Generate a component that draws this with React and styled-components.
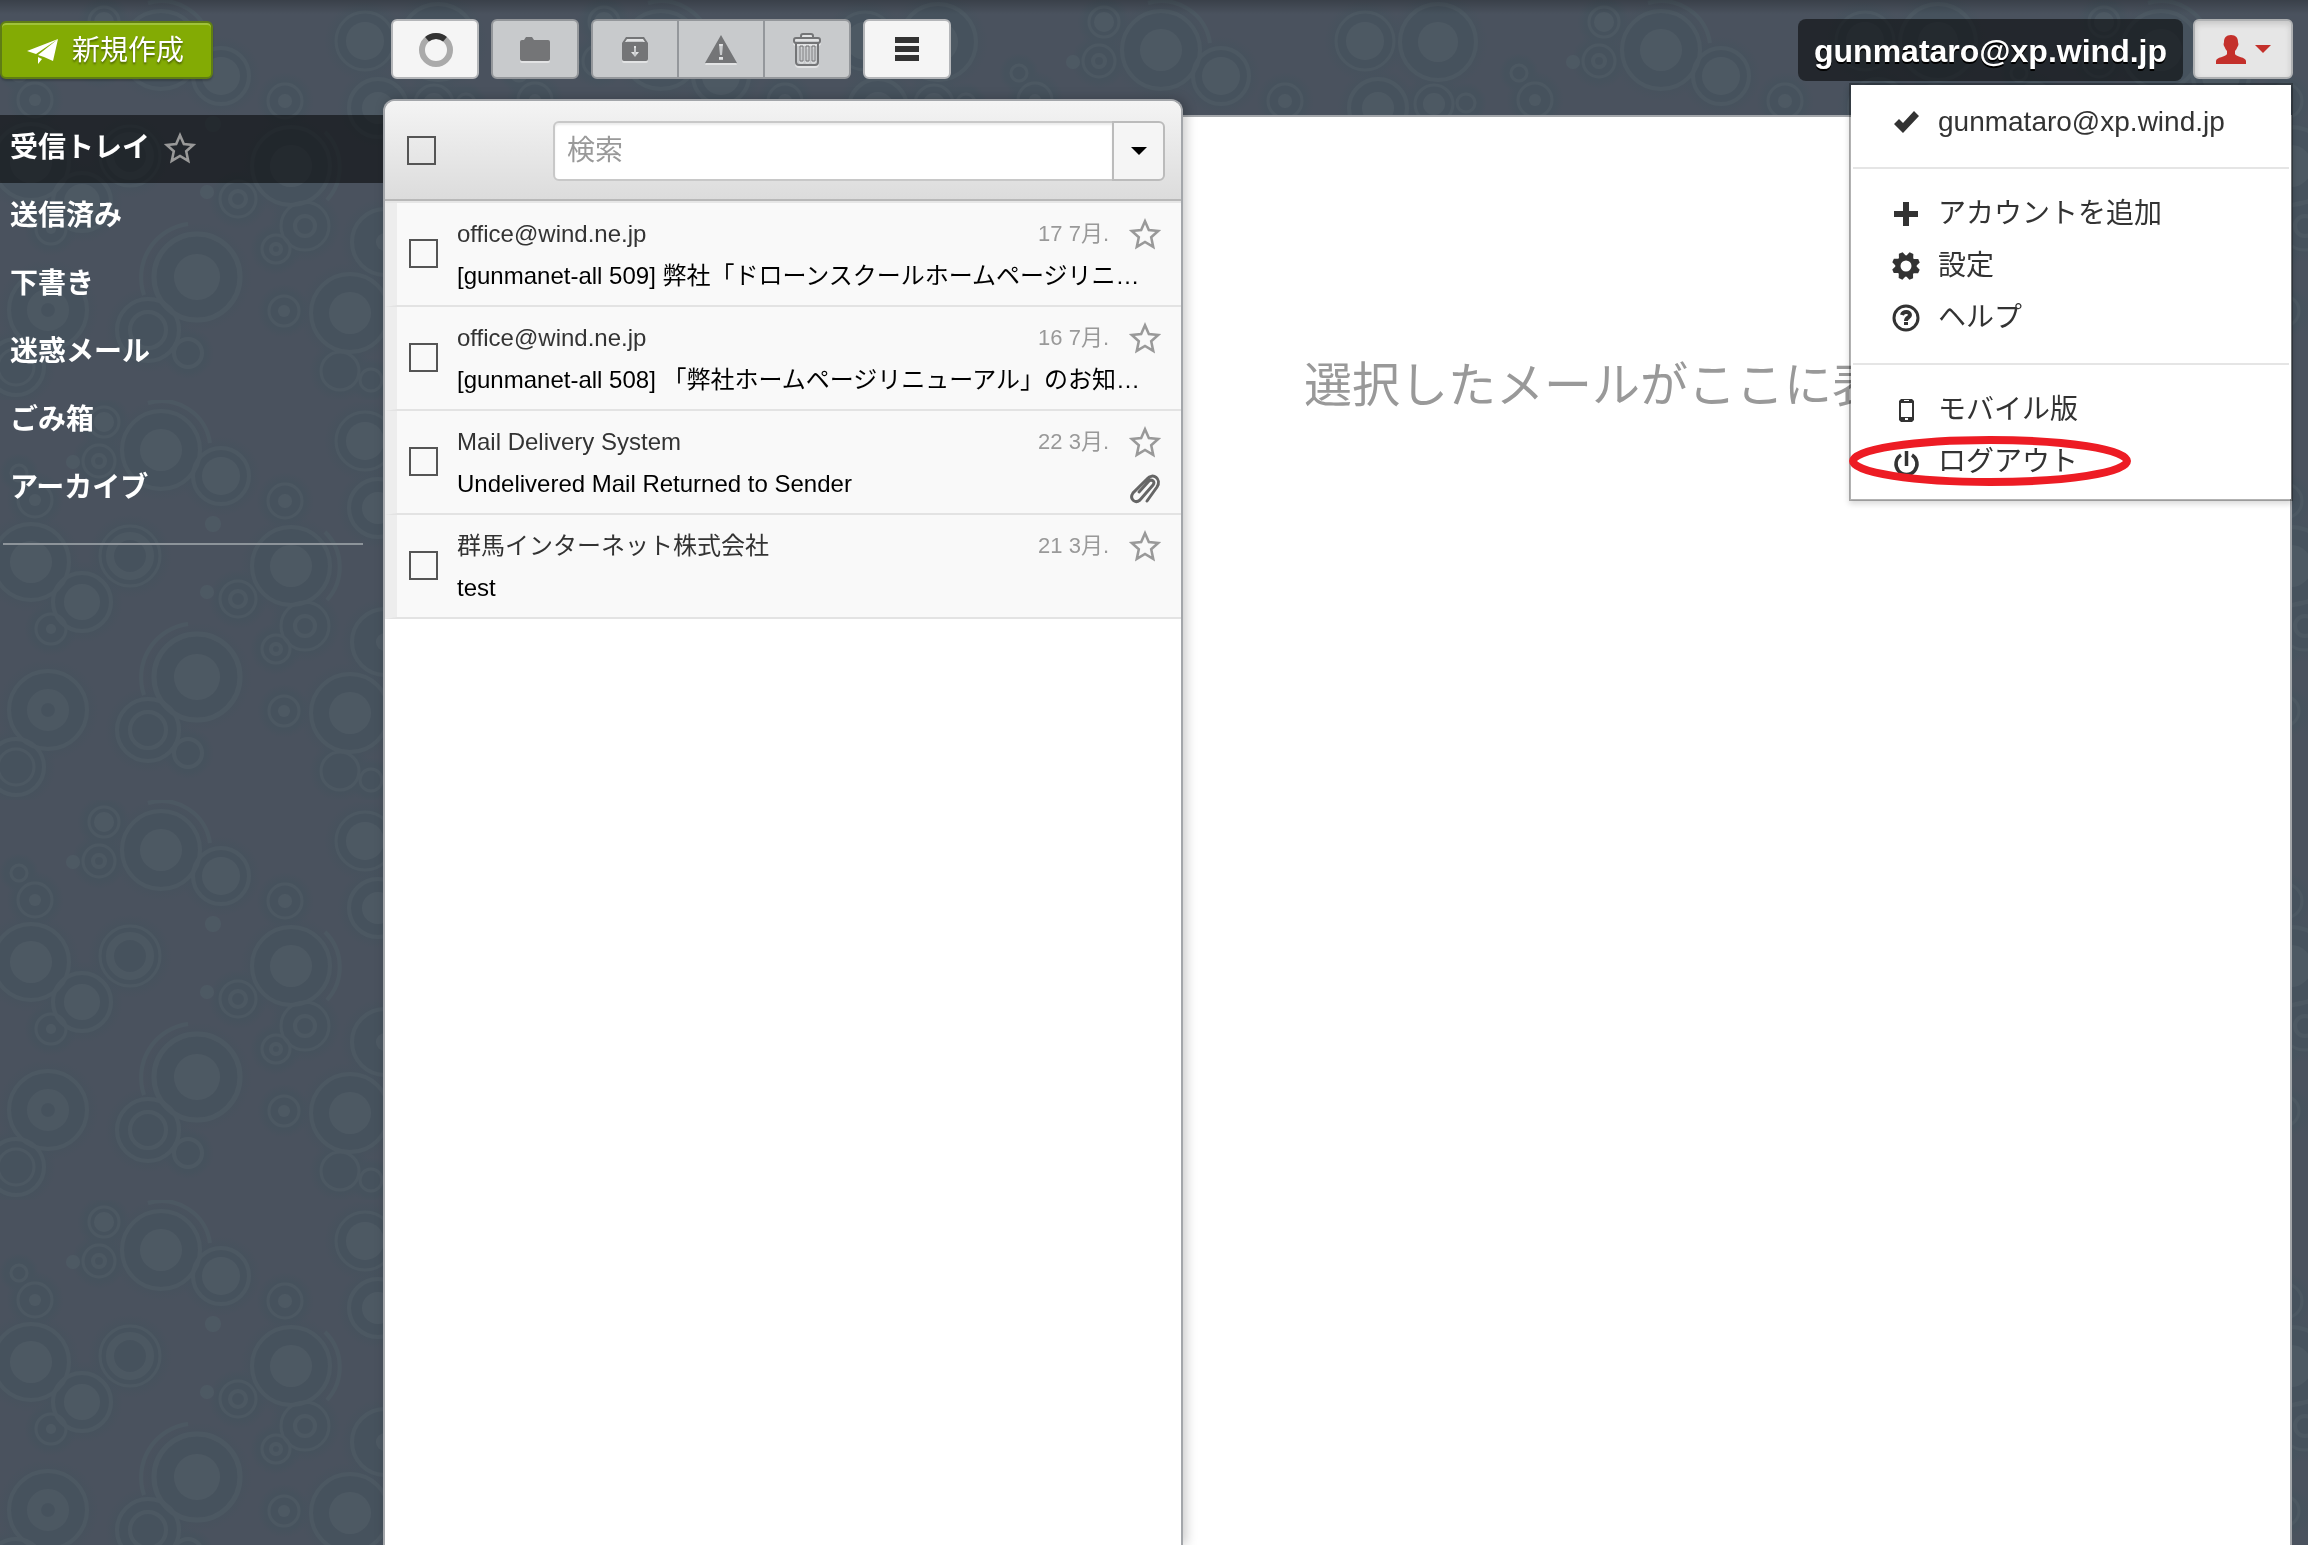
import React, { useState } from 'react';
import styled, { createGlobalStyle, css } from 'styled-components';

const GlobalStyle = createGlobalStyle`
  * {
    box-sizing: border-box;
  }
  body {
    margin: 0;
    background: #4a525e;
    font-family: "Liberation Sans", Arial, "Noto Sans CJK JP", sans-serif;
    font-size: 28px;
    color: #333;
  }
  button, input {
    font: inherit;
    color: inherit;
  }
  a {
    color: inherit;
    text-decoration: none;
  }
`;

///////////Background//////////
const BackdropSvg = styled.svg`
  position: fixed;
  inset: 0;
  z-index: -1;
  width: 100%;
  height: 100%;
`;

// ring: [x, y, radius, stroke], disc: [x, y, radius]
const rings = [
  [31, 162, 38, 4], [130, 156, 30, 3], [130, 156, 20, 8], [82, 202, 29, 4],
  [51, 229, 15, 3], [291, 166, 39, 4], [238, 199, 18, 3], [238, 199, 8, 4],
  [305, 226, 24, 3], [305, 226, 10, 4], [276, 249, 14, 3], [276, 249, 5, 4],
  [197, 277, 43, 5], [385, 242, 33, 4], [48, 310, 39, 4], [48, 310, 14, 14],
  [284, 311, 15, 3], [350, 313, 39, 4], [148, 330, 31, 4], [148, 330, 18, 4],
  [188, 353, 14, 4], [340, 371, 19, 3], [371, 380, 11, 3], [16, 367, 28, 4],
  [16, 367, 18, 3], [104, 22, 15, 3], [161, 50, 39, 4], [99, 61, 16, 3],
  [99, 61, 6, 4], [19, 73, 8, 3], [365, 41, 29, 3], [35, 100, 17, 3],
  [285, 101, 17, 3], [378, 108, 29, 4], [434, 104, 19, 3], [466, 103, 9, 3],
  [438, 42, 38, 4], [221, 76, 28, 4],
];
const discs = [
  [31, 162, 21], [82, 202, 18], [51, 229, 5], [291, 166, 21], [207, 192, 7],
  [197, 277, 23], [385, 242, 9], [284, 311, 6], [350, 313, 21], [104, 22, 10],
  [161, 50, 21], [73, 62, 7], [221, 76, 19], [365, 41, 19], [35, 100, 6],
  [285, 101, 7], [378, 108, 16], [213, 124, 8], [434, 104, 11], [438, 42, 20],
];

const Backdrop = () => (
  <BackdropSvg aria-hidden="true">
    <defs>
      <radialGradient id="halo">
        <stop offset="0.7" stopColor="#46525d" />
        <stop offset="1" stopColor="#46525d" stopOpacity="0" />
      </radialGradient>
      <pattern id="bubbles" width="500" height="400" patternUnits="userSpaceOnUse">
        <rect width="500" height="400" fill="#4a525e" />
        {rings.map(([x, y, r], i) => (
          <circle key={i} cx={x} cy={y} r={r + 12} fill="url(#halo)" />
        ))}
        <g fill="none" stroke="#4c5862">
          {rings.map(([x, y, r, w], i) => (
            <circle key={i} cx={x} cy={y} r={r} strokeWidth={w} />
          ))}
          <path d="M144 295a54 54 0 0 1 44-71" strokeWidth="4" />
          <path d="M148 3a49 49 0 0 1 62 40" strokeWidth="4" />
          <path d="M325 132a49 49 0 0 1 2 68" strokeWidth="4" />
        </g>
        <g fill="#4d5963">
          {discs.map(([x, y, r], i) => (
            <circle key={i} cx={x} cy={y} r={r} />
          ))}
        </g>
      </pattern>
      <linearGradient id="topShade" x1="0" y1="0" x2="0" y2="1">
        <stop offset="0" stopColor="#000" stopOpacity="0.22" />
        <stop offset="1" stopColor="#000" stopOpacity="0" />
      </linearGradient>
    </defs>
    <rect width="100%" height="100%" fill="url(#bubbles)" />
    <rect width="100%" height="14" fill="url(#topShade)" />
  </BackdropSvg>
);

///////////Icons//////////
const Icon = styled.svg`
  display: block;
  flex: none;
  overflow: visible;
  fill: currentColor;
`;

const PlaneIcon = () => (
  <Icon width="31" height="25" viewBox="0 0 31 25">
    <path d="M0 12 31 0 9 15zM11 16 31 0 26 22 17 18zM11 18l4 2-4 5z" />
  </Icon>
);

const StarIcon = () => (
  <Icon width="32" height="32" viewBox="0 0 30 30">
    <path
      d="M15 3l3.6 8.2 8.8.9-6.6 6 1.9 8.9-7.7-4.6-7.7 4.6 1.9-8.9-6.600-6 8.8-.9z"
      fill="none" stroke="currentColor" strokeWidth="2.4"
    />
  </Icon>
);

const SpinnerIcon = () => (
  <Icon width="34" height="34" viewBox="0 0 34 34">
    <circle cx="18" cy="18" r="14" fill="none" stroke="#aaa" strokeWidth="6" />
    <path d="M9 7.300a14 14 0 0 1 18 0" fill="none" stroke="#333" strokeWidth="6" />
  </Icon>
);

const FolderIcon = () => (
  <Icon width="30" height="25" viewBox="0 0 30 25">
    <path d="M2 3h2l2-3h6l2 3h14a2 2 0 0 1 2 2v17a2 2 0 0 1-2 2H2a2 2 0 0 1-2-2V5a2 2 0 0 1 2-2z" />
  </Icon>
);

const ArchiveIcon = () => (
  <Icon width="26" height="24" viewBox="0 0 26 24">
    <path
      fillRule="evenodd"
      d="M4 0h18l4 6v16a2 2 0 0 1-2 2H2a2 2 0 0 1-2-2V6zM5 2 3 5h20l-2-3zM12 9v6H9l4 5 4-5h-3V9z"
    />
  </Icon>
);

const WarningIcon = () => (
  <Icon width="32" height="28" viewBox="0 0 32 28">
    <path fillRule="evenodd" d="M16 0 32 28H0zM14 9l1 11h2l1-11zM14 22v3h4v-3z" />
  </Icon>
);

const TrashIcon = () => (
  <Icon width="28" height="33" viewBox="0 0 28 33">
    <g fill="none" stroke="currentColor" strokeWidth="2">
      <path d="M8 5V3q0-2 2-2h8q2 0 2 2v2" />
      <rect x="1" y="5" width="26" height="5" rx="2" />
      <path d="M3 10v19q0 3 3 3h16q3 0 3-3V10" />
      <path d="M7 13h3v15H7zM13 13h3v15h-3zM19 13h3v15h-3z" strokeWidth="1" />
    </g>
  </Icon>
);

const MenuIcon = () => (
  <Icon width="24" height="24" viewBox="0 0 24 24">
    <path d="M0 0h24v6H0zM0 9h24v6H0zM0 18h24v6H0z" />
  </Icon>
);

const UserIcon = () => (
  <Icon width="30" height="29" viewBox="0 0 30 29">
    <path d="M15 0c5 0 7 3 7 7 0 1 1 2 0 4-1 1-1 3-3 5v3c1 3 11 3 11 7v3H0v-3c0-4 10-4 11-7v-3c-2-2-2-4-3-5-1-2 0-3 0-4 0-4 2-7 7-7z" />
  </Icon>
);

const CaretIcon = () => (
  <Icon width="16" height="8" viewBox="0 0 16 8">
    <path d="M0 0h16L8 8z" />
  </Icon>
);

const ClipIcon = () => (
  <Icon width="32" height="32" viewBox="0 0 32 32">
    <path
      d="M18 28 28 14c5-8-4-15-10-8L4 20c-4 6 2 11 7 7L24 12c3-4-2-6-4-4L10 19"
      fill="none" stroke="#666" strokeWidth="3" strokeLinecap="round"
    />
  </Icon>
);

const CheckIcon = () => (
  <Icon width="25" height="22" viewBox="0 0 25 22">
    <path d="m0 13 5-5 4 4L20 0l5 5L9 22z" />
  </Icon>
);

const PlusIcon = () => (
  <Icon width="24" height="24" viewBox="0 0 24 24">
    <path d="M9 0h6v9h9v6h-9v9H9v-9H0V9h9z" />
  </Icon>
);

const GearIcon = () => (
  <Icon width="28" height="28" viewBox="0 0 28 28">
    <circle cx="14" cy="14" r="8" fill="none" stroke="currentColor" strokeWidth="5" />
    {[23, 68, 113, 158, 203, 248, 293, 338].map((deg) => (
      <path key={deg} d="M10 5 12 0h4l2 5z" transform={`rotate(${deg} 14 14)`} />
    ))}
  </Icon>
);

const HelpIcon = () => (
  <Icon width="28" height="28" viewBox="0 0 28 28">
    <circle cx="14" cy="14" r="12" fill="none" stroke="currentColor" strokeWidth="3" />
    <path d="M10 11c1-4 8-4 8 0 0 3-4 2-4 6" fill="none" stroke="currentColor" strokeWidth="4" />
    <path d="M12 18h4v3h-4z" />
  </Icon>
);

const MobileIcon = () => (
  <Icon width="15" height="23" viewBox="0 0 15 23">
    <path
      fillRule="evenodd"
      d="M2 0h11l2 2v19l-2 2H2l-2-2V2zM2 4v14h11V4zM5 1v1h5V1zM6 19v2h3v-2z"
    />
  </Icon>
);

const PowerIcon = () => (
  <Icon width="25" height="25" viewBox="0 0 25 25">
    <path
      d="M7 5a10.500 10.500 0 1 0 11 0M12.500 1v15"
      fill="none" stroke="currentColor" strokeWidth="3.5"
    />
  </Icon>
);

///////////Layout//////////
const Page = styled.div`
  display: flex;
  flex-direction: column;
  min-height: 100vh;
`;

const Header = styled.header`
  display: flex;
  align-items: flex-start;
  height: 99px;
  padding: 19px 15px 0 0;
`;

const ComposeArea = styled.div`
  flex: 0 0 391px;
  padding-top: 2px;
`;

const Main = styled.main`
  flex: 1;
  display: grid;
  grid-template-columns: 383px minmax(0, 800fr) minmax(0, 1109fr);
  padding-right: 16px;
`;

///////////Buttons//////////
const ComposeButton = styled.button`
  display: flex;
  align-items: center;
  gap: 14px;
  height: 58px;
  width: 213px;
  padding: 2px 25px 0;
  border: 2px solid #5f7d14;
  border-radius: 6px;
  background: #83ab04;
  box-shadow: inset 0 2px 0 #9fc23a, 0 2px 2px rgba(0, 0, 0, 0.2);
  color: #fff;
  line-height: 40px;
  white-space: nowrap;
  text-shadow: 0 2px 2px rgba(0, 0, 0, 0.4);
`;

const Toolbar = styled.div`
  display: flex;
  gap: 12px;
`;

const ButtonGroup = styled.div`
  display: flex;

  button + button {
    margin-left: -2px;
  }
  button:not(:first-child) {
    border-top-left-radius: 0;
    border-bottom-left-radius: 0;
  }
  button:not(:last-child) {
    border-top-right-radius: 0;
    border-bottom-right-radius: 0;
  }
`;

const ToolButton = styled.button`
  display: flex;
  align-items: center;
  justify-content: center;
  gap: 9px;
  width: ${({ $wide }) => ($wide ? '100px' : '88px')};
  height: 60px;
  padding: 0;
  border: 2px solid #b4b6b9;
  border-radius: 6px;
  background: #f5f5f5;
  color: #333;

  &:disabled {
    border-color: #94979b;
    background: #c8cacc;
    color: #747577;
  }
  &:disabled svg {
    filter: drop-shadow(0 2px 0 #e2e3e4);
  }
  ${({ $active }) => $active && css`
    border-color: #aeb0b2;
    background: #e6e6e6;
    box-shadow: inset 0 3px 6px rgba(0, 0, 0, 0.14);
    color: #c4302b;
  `}
`;

///////////Account//////////
const Account = styled.div`
  display: flex;
  gap: 10px;
  margin-left: auto;
`;

const AccountName = styled.span`
  height: 62px;
  padding: 0 16px;
  border-radius: 8px;
  background: rgba(0, 0, 0, 0.52);
  color: #fff;
  font-size: 32px;
  font-weight: bold;
  line-height: 64px;
  text-shadow: 0 2px 0 #000;
`;

const AccountMenu = styled.div`
  position: relative;
`;

const Dropdown = styled.nav`
  position: absolute;
  top: 64px;
  right: 0;
  z-index: 10;
  width: 444px;
  padding: 11px 0;
  border: 2px solid rgba(0, 0, 0, 0.3);
  background: #fff;
  background-clip: padding-box;
  box-shadow: 0 3px 6px rgba(0, 0, 0, 0.15);
`;

const Divider = styled.hr`
  height: 2px;
  margin: 19px 2px;
  border: 0;
  background: #e5e5e5;
`;

const MenuLink = styled.a`
  position: relative;
  display: flex;
  align-items: center;
  gap: 18px;
  height: 52px;
  padding-left: 41px;
  line-height: 54px;
  white-space: nowrap;
`;

const IconSlot = styled.span`
  display: flex;
  justify-content: center;
  width: 28px;
`;

const Marker = styled.svg`
  position: absolute;
  left: -2px;
  top: 0;
  width: 283px;
  height: 50px;
  fill: none;
  stroke: #ed1c24;
  stroke-width: 8px;
`;

///////////Sidebar//////////
const Sidebar = styled.nav`
  margin-top: 16px;
`;

const FolderLink = styled.a`
  display: flex;
  align-items: center;
  gap: 14px;
  height: 68px;
  padding: 0 0 2px 10px;
  background: ${({ $selected }) => ($selected ? 'rgba(0, 0, 0, 0.52)' : 'none')};
  color: #fff;
  font-weight: bold;
  line-height: 66px;

  svg {
    color: #999;
  }
`;

const FolderRule = styled.hr`
  height: 2px;
  margin: 20px 20px 0 3px;
  border: 0;
  background: #8d949a;
`;

///////////Message list//////////
const ListPanel = styled.section`
  position: relative;
  border: 2px solid #a3a6aa;
  border-bottom: 0;
  border-radius: 12px 12px 0 0;
  background: #fff;
  box-shadow: 3px 0 12px rgba(0, 0, 0, 0.22);
`;

const ListHeader = styled.div`
  display: flex;
  align-items: center;
  height: 100px;
  padding: 2px 16px 0 22px;
  border-bottom: 2px solid #b8b8b8;
  border-radius: 10px 10px 0 0;
  background: linear-gradient(#f4f4f4, #dcdcdc);
`;

const CheckBox = styled.input`
  appearance: none;
  flex: none;
  width: 29px;
  height: 29px;
  margin: 0 0 2px;
  border: 2px solid #555;

  &:checked {
    background: #555;
  }
`;

const SearchBox = styled.form`
  flex: 1;
  display: flex;
  height: 60px;
  margin-left: 117px;
`;

const SearchInput = styled.input`
  flex: 1;
  min-width: 0;
  padding: 0 12px;
  border: 2px solid #c8c8c8;
  border-radius: 6px 0 0 6px;
  background: #fff;
  box-shadow: inset 0 2px 2px rgba(0, 0, 0, 0.08);

  &::placeholder {
    color: #999;
    opacity: 1;
  }
`;

const SearchOptions = styled.button`
  display: flex;
  align-items: center;
  justify-content: center;
  width: 53px;
  margin-left: -2px;
  padding: 0;
  border: 2px solid #bbb;
  border-radius: 0 6px 6px 0;
  background: #f5f5f5;
  color: #000;
`;

const Messages = styled.ul`
  margin: 0;
  padding: 0;
  border-top: 2px solid #e6e6e6;
  list-style: none;
`;

const Message = styled.li`
  display: flex;
  align-items: center;
  gap: 19px;
  height: 104px;
  padding: 0 20px 0 12px;
  border-left: 12px solid #ededed;
  border-bottom: 2px solid #e3e3e3;
  background: #f9f9f9;
  font-size: 24px;
`;

const MessageText = styled.div`
  flex: 1;
  min-width: 0;
  padding-top: 2px;
  line-height: 42px;
`;

const Line = styled.div`
  display: flex;
  align-items: flex-end;
  height: 42px;
  white-space: nowrap;
`;

const Sender = styled.span`
  flex: 1;
`;

const Sent = styled.time`
  color: #999;
  font-size: 22px;
`;

const Subject = styled.a`
  flex: 1;
  min-width: 0;
  margin-right: ${({ $clipped }) => ($clipped ? '0' : '16px')};
  color: #000;
  overflow: hidden;
  text-overflow: ellipsis;
`;

const StarButton = styled.button`
  align-self: center;
  margin-left: 20px;
  padding: 0;
  border: 0;
  background: none;
  color: #999;
`;

///////////Reader//////////
const Reader = styled.section`
  margin-top: 16px;
  border: 2px solid #a3a6aa;
  border-left: 0;
  border-bottom: 0;
  background: #fff;
`;

const EmptyText = styled.p`
  margin: 234px 6px 0 0;
  color: #999;
  font-size: 48px;
  line-height: 70px;
  text-align: center;
  white-space: nowrap;
`;

const folders = ['受信トレイ', '送信済み', '下書き', '迷惑メール', 'ごみ箱', 'アーカイブ'];

const messages = [
  {
    id: 1,
    from: 'office@wind.ne.jp',
    date: '17 7月.',
    subject: '[gunmanet-all 509] 弊社「ドローンスクールホームページリニューアル」のお知らせ',
  },
  {
    id: 2,
    from: 'office@wind.ne.jp',
    date: '16 7月.',
    subject: '[gunmanet-all 508] 「弊社ホームページリニューアル」のお知らせ',
  },
  {
    id: 3,
    from: 'Mail Delivery System',
    date: '22 3月.',
    subject: 'Undelivered Mail Returned to Sender',
    attachment: true,
  },
  { id: 4, from: '群馬インターネット株式会社', date: '21 3月.', subject: 'test' },
];

const MenuItem = ({ icon, children }) => (
  <MenuLink href="#">
    <IconSlot>{icon}</IconSlot>
    {children}
  </MenuLink>
);

const MessageRow = ({ message }) => (
  <Message>
    <CheckBox type="checkbox" aria-label={message.subject} />
    <MessageText>
      <Line>
        <Sender>{message.from}</Sender>
        <Sent>{message.date}</Sent>
        <StarButton type="button" aria-label="スター">
          <StarIcon />
        </StarButton>
      </Line>
      <Line>
        <Subject href="#" $clipped={message.attachment}>{message.subject}</Subject>
        {message.attachment && <ClipIcon />}
      </Line>
    </MessageText>
  </Message>
);

export default function App() {
  const [open, setOpen] = useState(true);

  return (
    <Page>
      <GlobalStyle />
      <Backdrop />
      <Header>
        <ComposeArea>
          <ComposeButton type="button">
            <PlaneIcon />
            新規作成
          </ComposeButton>
        </ComposeArea>
        <Toolbar>
          <ToolButton type="button" aria-label="更新"><SpinnerIcon /></ToolButton>
          <ToolButton type="button" aria-label="移動" disabled><FolderIcon /></ToolButton>
          <ButtonGroup>
            <ToolButton type="button" aria-label="アーカイブ" disabled><ArchiveIcon /></ToolButton>
            <ToolButton type="button" aria-label="迷惑メール" disabled><WarningIcon /></ToolButton>
            <ToolButton type="button" aria-label="削除" disabled><TrashIcon /></ToolButton>
          </ButtonGroup>
          <ToolButton type="button" aria-label="メニュー"><MenuIcon /></ToolButton>
        </Toolbar>
        <Account>
          <AccountName>gunmataro@xp.wind.jp</AccountName>
          <AccountMenu>
            <ToolButton
              type="button"
              aria-label="アカウント"
              aria-expanded={open}
              $wide
              $active={open}
              onClick={() => setOpen(!open)}
            >
              <UserIcon />
              <CaretIcon />
            </ToolButton>
            {open && (
              <Dropdown>
                <MenuItem icon={<CheckIcon />}>gunmataro@xp.wind.jp</MenuItem>
                <Divider />
                <MenuItem icon={<PlusIcon />}>アカウントを追加</MenuItem>
                <MenuItem icon={<GearIcon />}>設定</MenuItem>
                <MenuItem icon={<HelpIcon />}>ヘルプ</MenuItem>
                <Divider />
                <MenuItem icon={<MobileIcon />}>モバイル版</MenuItem>
                <MenuItem icon={<PowerIcon />}>
                  ログアウト
                  <Marker viewBox="0 0 283 50" aria-hidden="true">
                    <ellipse cx="141" cy="25" rx="137" ry="21" />
                  </Marker>
                </MenuItem>
              </Dropdown>
            )}
          </AccountMenu>
        </Account>
      </Header>
      <Main>
        <Sidebar>
          {folders.map((name, i) => (
            <FolderLink key={name} href="#" $selected={i === 0}>
              {name}
              {i === 0 && <StarIcon />}
            </FolderLink>
          ))}
          <FolderRule />
        </Sidebar>
        <ListPanel>
          <ListHeader>
            <CheckBox type="checkbox" aria-label="すべて選択" />
            <SearchBox onSubmit={(e) => e.preventDefault()}>
              <SearchInput type="text" placeholder="検索" aria-label="検索" />
              <SearchOptions type="button" aria-label="検索オプション"><CaretIcon /></SearchOptions>
            </SearchBox>
          </ListHeader>
          <Messages>
            {messages.map((message) => (
              <MessageRow key={message.id} message={message} />
            ))}
          </Messages>
        </ListPanel>
        <Reader>
          <EmptyText>選択したメールがここに表示されます。</EmptyText>
        </Reader>
      </Main>
    </Page>
  );
}
